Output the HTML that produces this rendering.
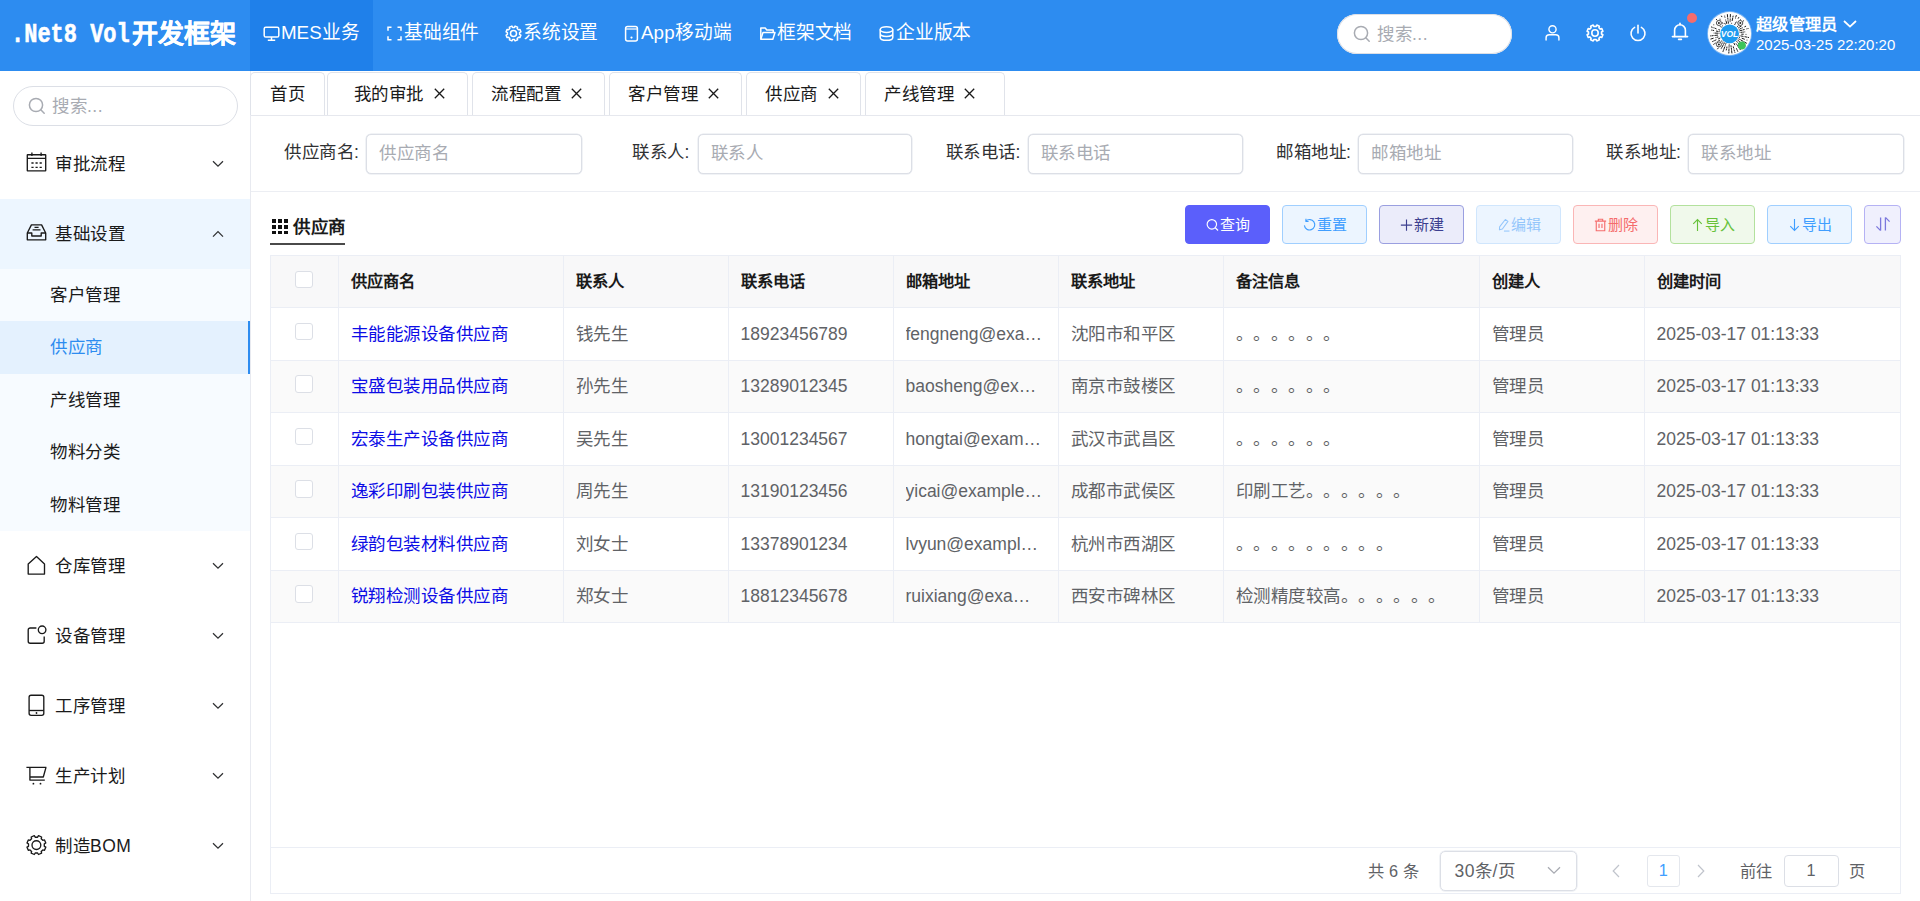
<!DOCTYPE html>
<html lang="zh-CN">
<head>
<meta charset="utf-8">
<title>供应商</title>
<style>
*{box-sizing:border-box;margin:0;padding:0}
html,body{width:1920px;height:901px;overflow:hidden;background:#fff}
body{font-family:"Liberation Sans",sans-serif;color:#303133;position:relative;font-size:17.5px;text-spacing-trim:space-all}
.abs{position:absolute}
svg{display:block;overflow:visible}
/* header */
#hd{position:absolute;left:0;top:0;width:1920px;height:71px;background:#2d8cf0}
#logo{position:absolute;left:11px;top:13px;height:44px;line-height:44px;color:#fff;font-weight:bold;white-space:nowrap;font-size:26.5px;letter-spacing:0}
#logo .mono{position:absolute;left:0;top:0;font-family:"Liberation Mono",monospace;font-size:28px;display:block;transform:scaleX(.785);transform-origin:0 50%;-webkit-text-stroke:.6px #fff}
#logo .cj{position:absolute;left:121px;top:-1px;font-size:26px;-webkit-text-stroke:.3px #fff}
#navact{position:absolute;left:250px;top:0;width:123px;height:71px;background:#1f80ea}
.nav{position:absolute;top:0;height:66px;line-height:66px;color:#fff;font-size:18.75px;white-space:nowrap}
.nav svg{position:absolute;top:25px;left:-18px}
#hsearch{position:absolute;left:1337px;top:14px;width:175px;height:40px;border-radius:20px;background:#fff;box-shadow:0 0 0 1px #dcdfe6 inset}
.ph{color:#a8abb2}
.hic{position:absolute}
/* sidebar */
#sb{position:absolute;left:0;top:71px;width:251px;height:830px;border-right:1px solid #e8eaf0;background:#fff}
#ssearch{position:absolute;left:13px;top:86px;width:225px;height:40px;border-radius:20px;background:#fff;border:1px solid #dcdfe6}
.mi{position:absolute;left:0;width:250px;height:70px}
.mi .t{position:absolute;left:55px;top:0;line-height:70px;font-size:17.5px;color:#1a1a1a;white-space:nowrap}
.mi svg.ic{position:absolute;left:26px;top:25px}
.mi svg.ar{position:absolute;left:211.5px;top:31px}
.si{position:absolute;left:0;width:250px;height:52.5px;line-height:52.5px;padding-left:50px;font-size:17.5px;color:#1a1a1a;white-space:nowrap}
/* tabs */
.tab{position:absolute;top:72px;height:43px;border:1px solid #e0e3ea;border-bottom:none;border-radius:5px 5px 0 0;background:#fff;font-size:17.5px;line-height:42px;color:#1a1a1a;white-space:nowrap}
.tab span{position:absolute;top:0}
.tab svg{position:absolute;top:15px}

.flab{position:absolute;top:132px;line-height:40px;font-size:17.5px;color:#303133;white-space:nowrap}
.finp{position:absolute;top:134px;height:40px;border:1px solid #dcdfe6;border-radius:5px;background:#fff;box-shadow:0 0 0 .5px #e4e7ed}
.finp span{position:absolute;left:12px;top:-1px;line-height:38px;font-size:17.5px;color:#a8abb2;white-space:nowrap}
.btn{position:absolute;top:205px;width:85px;height:39px;border:1px solid;border-radius:4px;font-size:15px;white-space:nowrap}
.btn i{position:absolute;left:20px;top:12px;display:block}
.btn i svg{width:13px;height:14px}
.btn b{position:absolute;left:34px;top:0;line-height:38px;font-weight:normal}

.hl{position:absolute;left:271px;width:1629px;height:1px;background:#ebeef5}
.vl{position:absolute;top:256px;width:1px;height:367px;background:#ebeef5}
.cb{position:absolute;left:295px;width:17.5px;height:17.5px;border:1px solid #dcdfe6;border-radius:3px;background:#fff}
.th{position:absolute;top:255px;line-height:52px;font-size:16.25px;font-weight:bold;color:#1a1a1a;white-space:nowrap}
.td{position:absolute;line-height:52px;height:52px;font-size:17.5px;color:#606266;white-space:nowrap;overflow:hidden}
.td.lk{color:#0c0ce6}
.pgt{top:852px;line-height:38px;font-size:16.25px;color:#606266;white-space:nowrap}

/* CJK advance correction (fallback font rounds advances) */
.mi .t,.si,.tab,.flab,.finp span,.td.c,.ph,.tt,.psel{letter-spacing:.5px}
.th,.pgt,#un{letter-spacing:.25px}
.nav{letter-spacing:-.25px}
</style>
</head>
<body>
<!--HEADER-->
<div id="hd">
<div id="navact"></div>
<div id="logo"><span class="mono">.Net8 Vol</span><span class="cj">开发框架</span></div>

<div class="nav" style="left:281px;letter-spacing:0"><svg width="17" height="17" viewBox="0 0 17 17" fill="none" stroke="#fff" stroke-width="1.5"><rect x="1.2" y="2.2" width="14.6" height="9.8" rx="1.6"/><path d="M8.5 12v3M4.8 15.2h7.4"/></svg>MES业务</div>
<div class="nav" style="left:404px"><svg width="17" height="17" viewBox="0 0 17 17" fill="none" stroke="#fff" stroke-width="1.5"><path d="M5.5 2.2H2v3.6M2 11.2v3.6h3.5M11.5 2.2H15v3.6M15 11.2v3.6h-3.5"/></svg>基础组件</div>
<div class="nav" style="left:523px"><svg width="17" height="17" viewBox="0 0 17 17" fill="none" stroke="#fff" stroke-width="1.5"><circle cx="8.5" cy="8.5" r="3"/><path d="M14.6 9.4L15.9 10.1L14.9 12.6L13.5 12.2L12.2 13.5L12.6 14.9L10.1 15.9L9.4 14.6L7.6 14.6L6.9 15.9L4.4 14.9L4.8 13.5L3.5 12.2L2.1 12.6L1.1 10.1L2.4 9.4L2.4 7.6L1.1 6.9L2.1 4.4L3.5 4.8L4.8 3.5L4.4 2.1L6.9 1.1L7.6 2.4L9.4 2.4L10.1 1.1L12.6 2.1L12.2 3.5L13.5 4.8L14.9 4.4L15.9 6.9L14.6 7.6Z" stroke-linejoin="round"/></svg>系统设置</div>
<div class="nav" style="left:641px;letter-spacing:.1px"><svg width="17" height="17" viewBox="0 0 17 17" fill="none" stroke="#fff" stroke-width="1.5"><rect x="2.6" y="1.4" width="11.8" height="14.6" rx="2"/><path d="M2.6 4h11.8" stroke-width="1.2"/><circle cx="8.5" cy="12.6" r="1.1" fill="#fff" stroke="none"/></svg>App移动端</div>
<div class="nav" style="left:777px"><svg width="17" height="17" viewBox="0 0 17 17" fill="none" stroke="#fff" stroke-width="1.5" stroke-linejoin="round"><path d="M1.8 14.2V3h4.4l1.6 2h6.4v2.4"/><path d="M1.8 14.2l2.2-6.8h12l-2.2 6.8z"/></svg>框架文档</div>
<div class="nav" style="left:896px"><svg width="17" height="17" viewBox="0 0 17 17" fill="none" stroke="#fff" stroke-width="1.5"><ellipse cx="8.5" cy="4.6" rx="6.3" ry="2.9"/><path d="M2.2 4.6v7.8c0 1.6 2.8 2.9 6.3 2.9s6.3-1.3 6.3-2.9V4.6M2.2 8.5c0 1.6 2.8 2.9 6.3 2.9s6.3-1.3 6.3-2.9"/></svg>企业版本</div>

<div id="hsearch">
<svg class="abs" style="left:16px;top:11px" width="18" height="18" viewBox="0 0 18 18" fill="none" stroke="#a8abb2" stroke-width="1.5"><circle cx="8" cy="8" r="6.6"/><path d="M12.8 12.8l3.4 3.4" stroke-linecap="round"/></svg>
<div class="abs ph" style="left:40px;top:0;line-height:40px;font-size:17.5px">搜索...</div>
</div>

<svg class="hic" style="left:1544px;top:24px" width="17" height="17" viewBox="0 0 18 18" fill="none" stroke="#fff" stroke-width="1.5"><circle cx="9" cy="5.6" r="3.8"/><path d="M2.2 17v-2.4c0-1.9 1.5-3.2 3.4-3.2h6.8c1.9 0 3.4 1.3 3.4 3.2V17" stroke-linecap="round"/></svg>
<svg class="hic" style="left:1586px;top:24px" width="18" height="18" viewBox="0 0 18 18" fill="none" stroke="#fff" stroke-width="1.6" stroke-linejoin="round"><circle cx="9" cy="9" r="3.2"/><path d="M15.5 10.0L16.9 10.8L15.8 13.4L14.3 12.9L12.9 14.3L13.4 15.8L10.8 16.9L10.0 15.5L8.0 15.5L7.2 16.9L4.6 15.8L5.1 14.3L3.7 12.9L2.2 13.4L1.1 10.8L2.5 10.0L2.5 8.0L1.1 7.2L2.2 4.6L3.7 5.1L5.1 3.7L4.6 2.2L7.2 1.1L8.0 2.5L10.0 2.5L10.8 1.1L13.4 2.2L12.9 3.7L14.3 5.1L15.8 4.6L16.9 7.2L15.5 8.0Z"/></svg>
<svg class="hic" style="left:1629px;top:24px" width="18" height="18" viewBox="0 0 18 18" fill="none" stroke="#fff" stroke-width="1.6" stroke-linecap="round"><path d="M9 1.4v7.6"/><path d="M5.6 3.4a7 7 0 1 0 6.8 0"/></svg>
<svg class="hic" style="left:1671px;top:22px" width="18" height="19" viewBox="0 0 18 19" fill="none" stroke="#fff" stroke-width="1.6" stroke-linecap="round" stroke-linejoin="round"><path d="M9 1.2v1.6"/><path d="M3.6 14.5V8.2a5.4 5.4 0 0 1 10.8 0v6.3"/><path d="M1.4 14.6h15.2"/><path d="M7.6 17.4h2.8"/></svg>
<div class="abs" style="left:1687px;top:13px;width:10px;height:10px;border-radius:50%;background:#f56c6c"></div>

<div id="avatar" class="abs" style="left:1708px;top:12px;width:43px;height:43px;border-radius:50%;background:#f4f4f4;overflow:hidden;box-shadow:0 0 0 1px rgba(255,255,255,.35)">
<svg width="43" height="43" viewBox="0 0 43 43"><circle cx="21.5" cy="21.5" r="21.5" fill="#fdfdfd"/><g id="qr"><path d="M33.7 22.2L35.3 22.2M38.0 22.4L38.0 22.4M32.0 23.8L32.0 23.8M33.2 24.0L34.8 24.3M36.0 24.6L36.0 24.6M37.3 24.8L38.8 25.1M40.1 25.4L40.6 25.5M31.5 25.4L31.6 25.4M34.1 26.3L36.4 27.2M39.0 28.1L39.0 28.1M30.8 26.9L30.9 26.9M31.9 27.5L32.0 27.5M33.0 28.1L35.1 29.3M36.2 29.9L36.2 29.9M37.3 30.5L38.5 31.2M29.9 28.3L30.6 28.8M31.6 29.6L31.6 29.6M32.6 30.4L34.5 31.9M35.5 32.6L36.8 33.7M28.8 29.5L29.4 30.2M30.2 31.1L31.3 32.2M33.2 34.3L33.2 34.3M34.1 35.2L34.7 35.9M28.3 31.8L28.8 32.5M29.5 33.6L29.5 33.6M30.2 34.6L31.1 35.9M31.8 37.0L32.3 37.7M26.0 31.3L26.7 32.8M28.5 36.6L28.9 37.5M29.4 38.6L29.7 39.3M25.3 34.8L25.5 35.7M25.9 36.9L25.9 36.9M26.2 38.1L26.4 38.9M26.8 40.1L26.9 40.4M23.0 33.7L23.1 34.6M23.3 35.9L23.5 37.4M23.6 38.7L23.9 41.0M21.2 32.3L21.2 32.3M21.1 33.6L21.1 34.4M21.0 35.7L21.0 35.7M21.0 37.0L20.9 38.6M20.9 39.8L20.8 41.1M18.9 35.0L18.8 35.9M18.5 37.1L18.3 38.0M17.9 31.6L17.9 31.7M17.5 32.8L17.5 32.8M17.0 34.0L17.0 34.0M16.6 35.2L15.8 37.4M15.3 38.6L15.0 39.5M16.4 30.9L15.6 32.3M15.0 33.4L13.8 35.5M13.2 36.6L13.2 36.6M15.0 30.0L15.0 30.0M14.3 31.0L12.8 32.9M12.0 33.9L11.0 35.1M10.2 36.1L9.6 36.9M13.8 28.9L13.8 28.9M12.9 29.7L12.9 29.8M12.0 30.6L12.0 30.6M11.0 31.5L11.0 31.5M10.1 32.3L8.3 33.9M11.5 28.4L9.5 29.7M8.5 30.4L8.5 30.4M7.4 31.1L7.4 31.1M6.4 31.8L5.7 32.3M12.0 26.1L10.5 26.8M8.0 27.9L6.6 28.6M5.4 29.1L4.6 29.5M10.0 25.0L9.1 25.2M7.9 25.6L7.9 25.6M5.2 26.3L2.9 27.0M9.6 23.1L7.2 23.4M6.0 23.5L5.9 23.5M4.7 23.7L3.8 23.8M2.6 23.9L2.6 23.9M11.0 21.3L11.0 21.3M9.7 21.2L7.4 21.1M6.1 21.1L6.1 21.1M11.2 19.6L11.2 19.6M10.0 19.4L8.4 19.1M5.7 18.5L4.8 18.3M3.6 18.1L3.6 18.1M11.7 18.0L10.8 17.7M8.2 16.8L7.4 16.4M6.2 16.0L6.2 16.0M5.0 15.6L5.0 15.6M3.9 15.1L3.4 15.0M5.8 12.8L5.8 12.8M13.3 15.1L13.3 15.1M12.3 14.4L11.6 13.8M10.6 13.0L9.3 12.0M14.4 13.9L14.4 13.9M12.5 11.9L12.5 11.9M10.7 9.9L10.1 9.2M9.2 8.3L8.4 7.4M14.9 11.6L14.9 11.6M14.2 10.6L14.2 10.6M12.7 8.3L12.6 8.3M12.0 7.2L11.9 7.2M17.2 12.1L16.8 11.3M13.8 4.7L13.5 4.1M18.7 11.5L18.1 9.2M17.7 8.0L17.7 8.0M17.0 5.3L17.0 5.3M16.7 4.1L16.7 4.1M20.4 11.2L20.2 9.6M20.0 8.3L20.0 8.3M19.9 7.1L19.8 6.2M19.6 5.0L19.4 2.6M22.1 9.6L22.1 9.6M22.1 8.4L22.2 7.5M22.2 6.2L22.2 6.2M22.3 4.9L22.4 2.5M23.7 11.3L23.7 11.3M24.2 8.6L24.7 6.2M24.9 5.0L25.1 4.1M27.4 6.1L27.4 6.1M27.8 4.9L28.3 3.5M26.8 12.5L26.8 12.4M27.4 11.4L28.2 10.0M30.3 6.3L30.7 5.5M30.0 11.0L30.0 11.0M30.8 10.0L31.8 8.8M32.6 7.8L32.6 7.8M29.4 14.5L30.6 13.4M31.5 12.6L31.5 12.6M33.5 10.7L33.5 10.7M34.4 9.9L35.6 8.8M30.4 15.8L30.4 15.8M31.5 15.1L33.5 13.8M31.2 17.3L31.2 17.3M32.4 16.7L33.2 16.4M34.3 15.8L34.3 15.8M36.8 14.7L37.7 14.3M31.8 18.8L34.1 18.2M35.3 17.8L36.2 17.6M38.8 16.9L38.8 16.9M40.0 16.5L40.1 16.5M32.1 20.5L32.1 20.5M33.4 20.3L34.3 20.2M35.5 20.1L35.5 20.1M36.8 19.9L36.8 19.9" stroke="#1c1c1c" stroke-width="1" stroke-linecap="round" fill="none"/><circle cx="10.9" cy="11.0" r="3.1" fill="#fff"/><circle cx="10.9" cy="11.0" r="2.5" fill="none" stroke="#222" stroke-width=".8"/><circle cx="10.9" cy="11.0" r="1" fill="#222"/><circle cx="32.3" cy="11.0" r="3.1" fill="#fff"/><circle cx="32.3" cy="11.0" r="2.5" fill="none" stroke="#222" stroke-width=".8"/><circle cx="32.3" cy="11.0" r="1" fill="#222"/><circle cx="10.9" cy="32.4" r="3.1" fill="#fff"/><circle cx="10.9" cy="32.4" r="2.5" fill="none" stroke="#222" stroke-width=".8"/><circle cx="10.9" cy="32.4" r="1" fill="#222"/></g><circle cx="21.6" cy="21.8" r="9.4" fill="#1e9bf0"/><text x="21.6" y="24.8" font-family="Liberation Sans" font-weight="bold" font-style="italic" font-size="8.5" fill="#fff" text-anchor="middle">VOL</text><circle cx="33.9" cy="33.6" r="4" fill="#3cc45b"/></svg>
</div>
<div class="abs" style="left:1756px;top:12px;height:24px;line-height:24px;font-size:16.25px;font-weight:bold;color:#fff;white-space:nowrap" id="un">超级管理员</div>
<svg class="abs" style="left:1843px;top:20px" width="14" height="8" viewBox="0 0 14 8" fill="none" stroke="#fff" stroke-width="1.8"><path d="M1 1l6 5.6L13 1"/></svg>
<div class="abs" style="left:1756px;top:35px;height:20px;line-height:20px;font-size:15px;color:#fff;white-space:nowrap">2025-03-25 22:20:20</div>
</div>
<!--SIDEBAR-->
<div id="sb"></div>
<div id="ssearch">
<svg class="abs" style="left:14px;top:10px" width="18" height="18" viewBox="0 0 18 18" fill="none" stroke="#a8abb2" stroke-width="1.5"><circle cx="8" cy="8" r="6.6"/><path d="M12.8 12.8l3.4 3.4" stroke-linecap="round"/></svg>
<div class="abs ph" style="left:38px;top:-1px;line-height:40px;font-size:17.5px">搜索...</div>
</div>
<div class="mi" style="top:128.75px"><div class="t">审批流程</div><svg class="ar" width="12" height="8" viewBox="0 0 12 8" fill="none" stroke="#303133" stroke-width="1.25"><path d="M1 1.2l5 5 5-5"/></svg></div>
<div class="mi" style="top:198.75px;background:#edf6ff"><div class="t">基础设置</div><svg class="ar" width="12" height="8" viewBox="0 0 12 8" fill="none" stroke="#303133" stroke-width="1.25"><path d="M1 6.6l5-5 5 5"/></svg></div>
<div class="abs" style="left:0;top:268.75px;width:250px;height:262.5px;background:#f7fbff"></div>
<div class="si" style="top:268.75px">客户管理</div>
<div class="si" style="top:321.25px;background:#e4f1fe;color:#2d8cf0;border-right:2.5px solid #2d8cf0">供应商</div>
<div class="si" style="top:373.75px">产线管理</div>
<div class="si" style="top:426.25px">物料分类</div>
<div class="si" style="top:478.75px">物料管理</div>
<div class="mi" style="top:531.25px"><div class="t">仓库管理</div><svg class="ar" width="12" height="8" viewBox="0 0 12 8" fill="none" stroke="#303133" stroke-width="1.25"><path d="M1 1.2l5 5 5-5"/></svg></div>
<div class="mi" style="top:601.25px"><div class="t">设备管理</div><svg class="ar" width="12" height="8" viewBox="0 0 12 8" fill="none" stroke="#303133" stroke-width="1.25"><path d="M1 1.2l5 5 5-5"/></svg></div>
<div class="mi" style="top:671.25px"><div class="t">工序管理</div><svg class="ar" width="12" height="8" viewBox="0 0 12 8" fill="none" stroke="#303133" stroke-width="1.25"><path d="M1 1.2l5 5 5-5"/></svg></div>
<div class="mi" style="top:741.25px"><div class="t">生产计划</div><svg class="ar" width="12" height="8" viewBox="0 0 12 8" fill="none" stroke="#303133" stroke-width="1.25"><path d="M1 1.2l5 5 5-5"/></svg></div>
<div class="mi" style="top:811.25px"><div class="t">制造BOM</div><svg class="ar" width="12" height="8" viewBox="0 0 12 8" fill="none" stroke="#303133" stroke-width="1.25"><path d="M1 1.2l5 5 5-5"/></svg></div>
<svg class="abs" style="left:26px;top:152px" width="21" height="20" viewBox="0 0 21 20" fill="none" stroke="#1a1a1a" stroke-width="1.35" stroke-linejoin="round"><rect x="1.3" y="2.7" width="18.4" height="16.2" rx=".4"/><path d="M1.3 6.3H19.7M5.9.5V4M15.1.5V4"/><path d="M5.4 11h2.2M9.5 11h2.2M13.6 11h2.2M5.4 15.3h2.2M9.5 15.3h2.2M13.6 15.3h2.2"/></svg>
<svg class="abs" style="left:26px;top:223px" width="21" height="18" viewBox="0 0 21 18" fill="none" stroke="#1a1a1a" stroke-width="1.35" stroke-linejoin="round"><path d="M1.3 10L5.4 1.9H15.6L19.7 10V16.8H1.3Z"/><path d="M1.3 10H5.8V13H15.2V10H19.7"/><path d="M8.5 4.3H12.6M6.6 6.9H14.5"/></svg>
<svg class="abs" style="left:26px;top:555px" width="21" height="21" viewBox="0 0 21 21" fill="none" stroke="#1a1a1a" stroke-width="1.35" stroke-linejoin="round"><path d="M2.2 19.1V8.9L10.5 1.4L18.5 8.9V19.1Z"/></svg>
<svg class="abs" style="left:26px;top:625px" width="22" height="20" viewBox="0 0 22 20" fill="none" stroke="#1a1a1a" stroke-width="1.35" stroke-linejoin="round"><path d="M10.4 3H4.2a2 2 0 0 0-2 2V16.2a2 2 0 0 0 2 2H16.2a2 2 0 0 0 2-2V11.4"/><circle cx="16.1" cy="4.8" r="3.8"/></svg>
<svg class="abs" style="left:26px;top:694px" width="21" height="23" viewBox="0 0 21 23" fill="none" stroke="#1a1a1a" stroke-width="1.35" stroke-linejoin="round"><rect x="3.1" y="1.2" width="14.7" height="20.1" rx="2"/><path d="M3.1 16.5H17.8"/><circle cx="10.5" cy="19" r=".9" fill="#1a1a1a" stroke="none"/></svg>
<svg class="abs" style="left:26px;top:766px" width="21" height="20" viewBox="0 0 21 20" fill="none" stroke="#1a1a1a" stroke-width="1.35" stroke-linejoin="round"><path d="M.4 1.4H20.4M3.9 1.4V14.1H18.8M20 1.4L17.3 11H3.9"/><circle cx="7.4" cy="17.7" r=".9" fill="#1a1a1a" stroke="none"/><circle cx="14.5" cy="17.7" r=".9" fill="#1a1a1a" stroke="none"/></svg>
<svg class="abs" style="left:26px;top:835px" width="21" height="21" viewBox="0 0 21 21" fill="none" stroke="#1a1a1a" stroke-width="1.35" stroke-linejoin="round"><path d="M18.3 11.3L19.8 12.2L18.5 15.3L16.8 14.9L15.2 16.5L15.6 18.2L12.5 19.5L11.6 18.0L9.2 18.0L8.3 19.5L5.2 18.2L5.6 16.5L4.0 14.9L2.3 15.3L1.0 12.2L2.5 11.3L2.5 8.9L1.0 8.0L2.3 4.9L4.0 5.3L5.6 3.7L5.2 2.0L8.3 0.7L9.2 2.2L11.6 2.2L12.5 0.7L15.6 2.0L15.2 3.7L16.8 5.3L18.5 4.9L19.8 8.0L18.3 8.9Z"/><circle cx="10.4" cy="10.1" r="4.4"/></svg>
<!--TABS-->
<div class="abs" style="left:251px;top:115px;width:1669px;height:1px;background:#e6e8ee"></div>
<div class="tab" style="left:249.5px;width:75.5px"><span style="left:19.5px">首页</span></div>
<div class="tab" style="left:327px;width:141px"><span style="left:25.5px">我的审批</span><svg style="left:105.5px" width="11" height="11" viewBox="0 0 11 11" fill="none" stroke="#1a1a1a" stroke-width="1.3"><path d="M.8.8l9.4 9.4M10.2.8L.8 10.2"/></svg></div>
<div class="tab" style="left:471.5px;width:133.5px"><span style="left:18.5px">流程配置</span><svg style="left:98.5px" width="11" height="11" viewBox="0 0 11 11" fill="none" stroke="#1a1a1a" stroke-width="1.3"><path d="M.8.8l9.4 9.4M10.2.8L.8 10.2"/></svg></div>
<div class="tab" style="left:608.5px;width:133.5px"><span style="left:18.5px">客户管理</span><svg style="left:98.5px" width="11" height="11" viewBox="0 0 11 11" fill="none" stroke="#1a1a1a" stroke-width="1.3"><path d="M.8.8l9.4 9.4M10.2.8L.8 10.2"/></svg></div>
<div class="tab" style="left:745.5px;width:115.5px"><span style="left:18.5px">供应商</span><svg style="left:81px" width="11" height="11" viewBox="0 0 11 11" fill="none" stroke="#1a1a1a" stroke-width="1.3"><path d="M.8.8l9.4 9.4M10.2.8L.8 10.2"/></svg></div>
<div class="tab" style="left:864.5px;width:140.5px"><span style="left:18.5px">产线管理</span><svg style="left:98.5px" width="11" height="11" viewBox="0 0 11 11" fill="none" stroke="#1a1a1a" stroke-width="1.3"><path d="M.8.8l9.4 9.4M10.2.8L.8 10.2"/></svg></div>
<!--FORM-->
<div class="flab" style="left:284px">供应商名:</div><div class="finp" style="left:366px;width:215.5px"><span>供应商名</span></div>
<div class="flab" style="left:632px">联系人:</div><div class="finp" style="left:697.5px;width:214px"><span>联系人</span></div>
<div class="flab" style="left:945.5px">联系电话:</div><div class="finp" style="left:1027.5px;width:215.5px"><span>联系电话</span></div>
<div class="flab" style="left:1276px">邮箱地址:</div><div class="finp" style="left:1358px;width:214.5px"><span>邮箱地址</span></div>
<div class="flab" style="left:1606px">联系地址:</div><div class="finp" style="left:1688px;width:215.5px"><span>联系地址</span></div>
<div class="abs" style="left:251px;top:191px;width:1669px;height:1px;background:#eceef3"></div>
<!--TOOLBAR-->
<svg class="abs" style="left:272px;top:219px" width="16" height="15" viewBox="0 0 16 15" fill="#111" shape-rendering="crispEdges"><rect x="0" y="0" width="4" height="3.5"/><rect x="5.5" y="0" width="4" height="3.5"/><rect x="11.5" y="0" width="4" height="3.5"/><rect x="0" y="5.5" width="4" height="4"/><rect x="5.5" y="5.5" width="4" height="4"/><rect x="11.5" y="5.5" width="4" height="4"/><rect x="0" y="11.5" width="4" height="3.5"/><rect x="5.5" y="11.5" width="4" height="3.5"/><rect x="11.5" y="11.5" width="4" height="3.5"/></svg>
<div class="abs tt" style="left:293px;top:214px;line-height:26px;font-size:17.5px;font-weight:bold;color:#1a1a1a;white-space:nowrap">供应商</div>
<div class="abs" style="left:270px;top:243px;width:75px;height:2px;background:#4a4a4a"></div>
<div class="btn" style="left:1185px;background:#5b5ffb;border-color:#5b5ffb;color:#fff"><i><svg width="16" height="16" viewBox="0 0 16 16" fill="none" stroke="#fff" stroke-width="1.4"><circle cx="7.2" cy="7.2" r="5.8"/><path d="M11.4 11.4l3.4 3.4"/></svg></i><b>查询</b></div>
<div class="btn" style="left:1282px;background:#ecf5ff;border-color:#a0cfff;color:#409eff"><i><svg width="15" height="16" viewBox="0 0 15 16" fill="none" stroke="#409eff" stroke-width="1.3"><path d="M3.2 3.6A6 6 0 1 1 1.6 8.4"/><path d="M3.4.8v3h3"/></svg></i><b>重置</b></div>
<div class="btn" style="left:1379px;background:#ebecfa;border-color:#9a9fe0;color:#3c3f8f"><i><svg width="15" height="16" viewBox="0 0 15 16" fill="none" stroke="#3c3f8f" stroke-width="1.3"><path d="M7.5 1.6v13M1 8.1h13"/></svg></i><b>新建</b></div>
<div class="btn" style="left:1476px;background:#ecf5ff;border-color:#d0e6fd;color:#94c6fb"><i><svg width="15" height="16" viewBox="0 0 15 16" fill="none" stroke="#94c6fb" stroke-width="1.2" stroke-linejoin="round"><path d="M9.6 1.6l3 2.2-6.4 8.8-3.4 1 .2-3.4z"/><path d="M8 15h6.4"/></svg></i><b>编辑</b></div>
<div class="btn" style="left:1573px;background:#fef0f0;border-color:#fab6b6;color:#f56c6c"><i><svg width="15" height="16" viewBox="0 0 15 16" fill="none" stroke="#f56c6c" stroke-width="1.3"><path d="M1 3.6h13M5 3.4V1.4h5v2"/><path d="M2.6 3.6v11h9.8v-11"/><path d="M5.8 6.6v5M9.2 6.6v5"/></svg></i><b>删除</b></div>
<div class="btn" style="left:1670px;background:#f0f9eb;border-color:#b3e19d;color:#67c23a"><i><svg width="15" height="16" viewBox="0 0 15 16" fill="none" stroke="#67c23a" stroke-width="1.3"><path d="M7.5 15V2M2.6 6.6l4.9-4.9 4.9 4.9"/></svg></i><b>导入</b></div>
<div class="btn" style="left:1767px;background:#ecf5ff;border-color:#a0cfff;color:#409eff"><i><svg width="15" height="16" viewBox="0 0 15 16" fill="none" stroke="#409eff" stroke-width="1.3"><path d="M7.5 1v13M2.6 9.4l4.9 4.9 4.9-4.9"/></svg></i><b>导出</b></div>
<div class="btn" style="left:1863.5px;width:37.5px;background:#f0f0fd;border-color:#b5b2f4;color:#7c78dd"><svg class="abs" style="left:10px;top:10px" width="16" height="16" viewBox="0 0 16 16" fill="none" stroke="#7c78dd" stroke-width="1.3"><path d="M5.6 14.6V1.6M5.6 14.6L1.4 10.4M10.4 1.4v13M10.4 1.4l4.2 4.2"/></svg></div>
<!--TABLE-->
<div id="tbl" class="abs" style="left:270px;top:255px;width:1631px;height:639px;border:1px solid #ebeef5"></div>
<div class="abs" style="left:271px;top:256px;width:1629px;height:51px;background:#f8f8f9"></div>
<div class="abs" style="left:271px;top:360.5px;width:1629px;height:52px;background:#fafafa"></div>
<div class="abs" style="left:271px;top:465.5px;width:1629px;height:52px;background:#fafafa"></div>
<div class="abs" style="left:271px;top:570.5px;width:1629px;height:52px;background:#fafafa"></div>
<div class="hl" style="top:307.0px"></div>
<div class="hl" style="top:359.5px"></div>
<div class="hl" style="top:412.0px"></div>
<div class="hl" style="top:464.5px"></div>
<div class="hl" style="top:517.0px"></div>
<div class="hl" style="top:569.5px"></div>
<div class="hl" style="top:622.0px"></div>
<div class="vl" style="left:338.0px"></div>
<div class="vl" style="left:563.0px"></div>
<div class="vl" style="left:728.0px"></div>
<div class="vl" style="left:893.0px"></div>
<div class="vl" style="left:1058.0px"></div>
<div class="vl" style="left:1223.0px"></div>
<div class="vl" style="left:1479.0px"></div>
<div class="vl" style="left:1644.0px"></div>
<div class="cb" style="top:270.5px"></div>
<div class="cb" style="top:322.75px"></div>
<div class="cb" style="top:375.25px"></div>
<div class="cb" style="top:427.75px"></div>
<div class="cb" style="top:480.25px"></div>
<div class="cb" style="top:532.75px"></div>
<div class="cb" style="top:585.25px"></div>
<div class="th" style="left:350.5px">供应商名</div>
<div class="th" style="left:575.5px">联系人</div>
<div class="th" style="left:740.5px">联系电话</div>
<div class="th" style="left:905.5px">邮箱地址</div>
<div class="th" style="left:1070.5px">联系地址</div>
<div class="th" style="left:1235.5px">备注信息</div>
<div class="th" style="left:1491.5px">创建人</div>
<div class="th" style="left:1656.5px">创建时间</div>
<div class="td lk c" style="left:350.5px;top:307.5px;width:211.0px">丰能能源设备供应商</div>
<div class="td c" style="left:575.5px;top:307.5px;width:151.0px">钱先生</div>
<div class="td" style="left:740.5px;top:307.5px;width:151.0px">18923456789</div>
<div class="td" style="left:905.5px;top:307.5px;width:151.0px">fengneng@exa…</div>
<div class="td c" style="left:1070.5px;top:307.5px;width:151.0px">沈阳市和平区</div>
<div class="td c" style="left:1235.5px;top:307.5px;width:242.0px">。。。。。。</div>
<div class="td c" style="left:1491.5px;top:307.5px;width:151.0px">管理员</div>
<div class="td" style="left:1656.5px;top:307.5px;width:242.0px">2025-03-17 01:13:33</div>
<div class="td lk c" style="left:350.5px;top:360.0px;width:211.0px">宝盛包装用品供应商</div>
<div class="td c" style="left:575.5px;top:360.0px;width:151.0px">孙先生</div>
<div class="td" style="left:740.5px;top:360.0px;width:151.0px">13289012345</div>
<div class="td" style="left:905.5px;top:360.0px;width:151.0px">baosheng@ex…</div>
<div class="td c" style="left:1070.5px;top:360.0px;width:151.0px">南京市鼓楼区</div>
<div class="td c" style="left:1235.5px;top:360.0px;width:242.0px">。。。。。。</div>
<div class="td c" style="left:1491.5px;top:360.0px;width:151.0px">管理员</div>
<div class="td" style="left:1656.5px;top:360.0px;width:242.0px">2025-03-17 01:13:33</div>
<div class="td lk c" style="left:350.5px;top:412.5px;width:211.0px">宏泰生产设备供应商</div>
<div class="td c" style="left:575.5px;top:412.5px;width:151.0px">吴先生</div>
<div class="td" style="left:740.5px;top:412.5px;width:151.0px">13001234567</div>
<div class="td" style="left:905.5px;top:412.5px;width:151.0px">hongtai@exam…</div>
<div class="td c" style="left:1070.5px;top:412.5px;width:151.0px">武汉市武昌区</div>
<div class="td c" style="left:1235.5px;top:412.5px;width:242.0px">。。。。。。</div>
<div class="td c" style="left:1491.5px;top:412.5px;width:151.0px">管理员</div>
<div class="td" style="left:1656.5px;top:412.5px;width:242.0px">2025-03-17 01:13:33</div>
<div class="td lk c" style="left:350.5px;top:465.0px;width:211.0px">逸彩印刷包装供应商</div>
<div class="td c" style="left:575.5px;top:465.0px;width:151.0px">周先生</div>
<div class="td" style="left:740.5px;top:465.0px;width:151.0px">13190123456</div>
<div class="td" style="left:905.5px;top:465.0px;width:151.0px">yicai@example…</div>
<div class="td c" style="left:1070.5px;top:465.0px;width:151.0px">成都市武侯区</div>
<div class="td c" style="left:1235.5px;top:465.0px;width:242.0px">印刷工艺。。。。。。</div>
<div class="td c" style="left:1491.5px;top:465.0px;width:151.0px">管理员</div>
<div class="td" style="left:1656.5px;top:465.0px;width:242.0px">2025-03-17 01:13:33</div>
<div class="td lk c" style="left:350.5px;top:517.5px;width:211.0px">绿韵包装材料供应商</div>
<div class="td c" style="left:575.5px;top:517.5px;width:151.0px">刘女士</div>
<div class="td" style="left:740.5px;top:517.5px;width:151.0px">13378901234</div>
<div class="td" style="left:905.5px;top:517.5px;width:151.0px">lvyun@exampl…</div>
<div class="td c" style="left:1070.5px;top:517.5px;width:151.0px">杭州市西湖区</div>
<div class="td c" style="left:1235.5px;top:517.5px;width:242.0px">。。。。。。。。。</div>
<div class="td c" style="left:1491.5px;top:517.5px;width:151.0px">管理员</div>
<div class="td" style="left:1656.5px;top:517.5px;width:242.0px">2025-03-17 01:13:33</div>
<div class="td lk c" style="left:350.5px;top:570.0px;width:211.0px">锐翔检测设备供应商</div>
<div class="td c" style="left:575.5px;top:570.0px;width:151.0px">郑女士</div>
<div class="td" style="left:740.5px;top:570.0px;width:151.0px">18812345678</div>
<div class="td" style="left:905.5px;top:570.0px;width:151.0px">ruixiang@exa…</div>
<div class="td c" style="left:1070.5px;top:570.0px;width:151.0px">西安市碑林区</div>
<div class="td c" style="left:1235.5px;top:570.0px;width:242.0px">检测精度较高。。。。。。</div>
<div class="td c" style="left:1491.5px;top:570.0px;width:151.0px">管理员</div>
<div class="td" style="left:1656.5px;top:570.0px;width:242.0px">2025-03-17 01:13:33</div>
<!--PAGER-->
<div class="abs" style="left:271px;top:847px;width:1629px;height:1px;background:#ebeef5"></div>
<div class="abs pgt" style="left:1368px">共 6 条</div>
<div class="abs" style="left:1439.5px;top:851px;width:137px;height:40px;border:1px solid #dcdfe6;border-radius:5px;box-shadow:0 0 0 .5px #e4e7ed"><div class="abs psel" style="left:14px;top:0;line-height:38px;font-size:17.5px;color:#606266;white-space:nowrap">30条/页</div><svg class="abs" style="left:106px;top:14px" width="14" height="9" viewBox="0 0 14 9" fill="none" stroke="#a8abb2" stroke-width="1.3"><path d="M1 1.2l6 6 6-6"/></svg></div>
<svg class="abs" style="left:1612px;top:864px" width="8" height="14" viewBox="0 0 8 14" fill="none" stroke="#c0c4cc" stroke-width="1.2"><path d="M7 1L1.2 7 7 13"/></svg>
<div class="abs" style="left:1647px;top:855px;width:32.5px;height:32px;border:1px solid #e4e7ed;border-radius:3px;text-align:center;line-height:29px;font-size:16.25px;color:#409eff">1</div>
<svg class="abs" style="left:1697px;top:864px" width="8" height="14" viewBox="0 0 8 14" fill="none" stroke="#c0c4cc" stroke-width="1.2"><path d="M1 1l5.8 6L1 13"/></svg>
<div class="abs pgt" style="left:1740px">前往</div>
<div class="abs" style="left:1783.5px;top:855px;width:55px;height:32px;border:1px solid #dcdfe6;border-radius:4px;text-align:center;line-height:28px;font-size:16.25px;color:#606266">1</div>
<div class="abs pgt" style="left:1848.5px">页</div>
</body>
</html>
